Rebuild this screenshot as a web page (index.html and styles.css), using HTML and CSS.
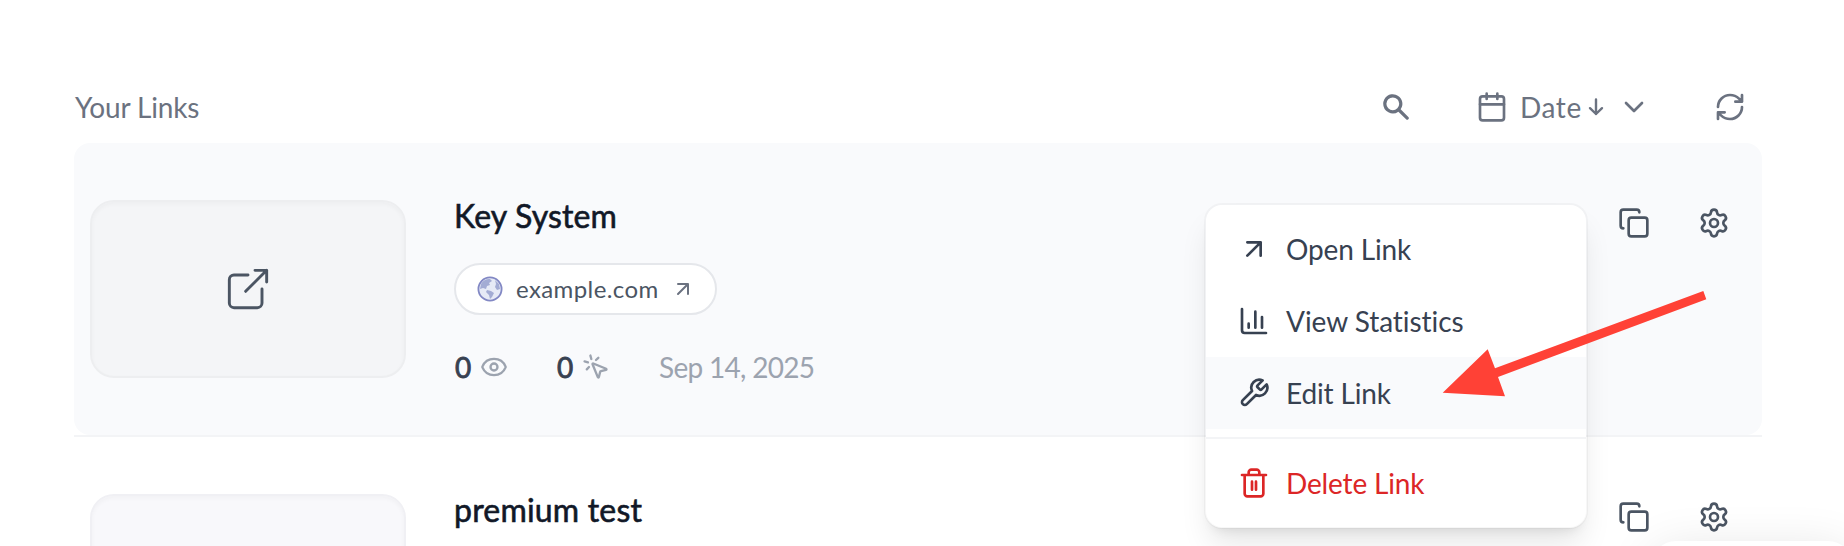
FILE: index.html
```html
<!DOCTYPE html>
<html lang="en">
<head>
<meta charset="utf-8">
<title>Your Links</title>
<link rel="stylesheet" href="styles.css">
</head>
<body>
<div class="screen">
<svg class="sprite" aria-hidden="true">
  <symbol id="copy" viewBox="0 0 24 24"><rect x="8" y="8" width="14" height="14" rx="2"/><path d="M4 16c-1.1 0-2-.9-2-2V4c0-1.1.9-2 2-2h10c1.100 0 2 .9 2 2"/></symbol>
  <symbol id="gear" viewBox="0 0 24 24"><path d="M9.671 4.136a2.340 2.340 0 0 1 4.659 0 2.340 2.340 0 0 0 3.319 1.915 2.340 2.340 0 0 1 2.330 4.033 2.340 2.340 0 0 0 0 3.831 2.340 2.340 0 0 1-2.330 4.033 2.340 2.340 0 0 0-3.319 1.915 2.340 2.340 0 0 1-4.659 0 2.340 2.340 0 0 0-3.320-1.915 2.340 2.340 0 0 1-2.330-4.033 2.340 2.340 0 0 0 0-3.831A2.340 2.340 0 0 1 6.350 6.051a2.340 2.340 0 0 0 3.319-1.915"/><circle cx="12" cy="12" r="3"/></symbol>
  <symbol id="out" viewBox="0 0 24 24"><path d="M7 7h10v10M7 17 17 7"/></symbol>
</svg>
<main class="page">
  <header class="toolbar">
    <h2 class="heading">Your Links</h2>
    <div class="tools">
      <svg class="search" viewBox="0 0 20 20"><path fill-rule="evenodd" d="M8 4a4 4 0 100 8 4 4 0 000-8zM2 8a6 6 0 1110.890 3.476l4.817 4.817a1 1 0 01-1.414 1.414l-4.816-4.816A6 6 0 012 8z"/></svg>
      <div class="sort">
        <svg class="icon" viewBox="0 0 24 24"><path d="M8 2v4M16 2v4M3 10h18"/><rect x="3" y="4" width="18" height="18" rx="2"/></svg>
        <span class="sort-label">Date</span>
        <svg class="sort-dir" viewBox="0 0 16 18"><path d="M8 1.500V16M2 10.200 8 16l6-5.800"/></svg>
        <svg class="icon" viewBox="0 0 24 24"><path d="m6 9 6 6 6-6"/></svg>
      </div>
      <svg class="icon" viewBox="0 0 24 24"><path d="M3 12a9 9 0 0 1 9-9 9.750 9.750 0 0 1 6.740 2.740L21 8M21 3v5h-5M21 12a9 9 0 0 1-9 9 9.750 9.750 0 0 1-6.740-2.740L3 16M8 16H3v5"/></svg>
    </div>
  </header>

  <article class="row row-active">
    <div class="thumb">
      <svg class="thumb-icon" viewBox="0 0 24 24"><path d="M12 6H6a2 2 0 0 0-2 2v10a2 2 0 0 0 2 2h10a2 2 0 0 0 2-2v-6M11 13l9-9M15 4h5v5"/></svg>
    </div>
    <div class="info">
      <h3 class="title title-key">Key System</h3>
      <div class="pill">
        <svg class="globe" viewBox="0 0 26 26"><circle cx="13" cy="13" r="11.600" fill="#e6eaf6" stroke="#8288c4" stroke-width="1.800"/><path fill="#a3acd4" d="M4 8C6 4 10 2.500 13 3l2 2-3 2 1 2-3 1-1 3-3-1-3 1zM10 14l4 1 3 2-2 4-2 2-1-4-3-3zM18 4l4 4 1 5-3 1-2-3 1-3z"/></svg>
        <span class="domain">example.com</span>
        <svg class="pill-out"><use href="#out"/></svg>
      </div>
      <div class="stats">
        <div class="stat"><b class="count">0</b><svg class="stat-icon" viewBox="0 0 24 24"><path d="M2.062 12.348a1 1 0 0 1 0-.696 10.750 10.750 0 0 1 19.876 0 1 1 0 0 1 0 .696 10.750 10.750 0 0 1-19.876 0"/><circle cx="12" cy="12" r="3"/></svg></div>
        <div class="stat"><b class="count">0</b><svg class="stat-icon" viewBox="0 0 24 24"><path d="M14 4.100 12 6M5.100 8l-2.900-.8M6 12l-1.900 2M7.200 2.200 8 5.100M9.037 9.690a.498.498 0 0 1 .653-.653l11 4.500a.5.5 0 0 1-.074.949l-4.349 1.041a1 1 0 0 0-.74.739l-1.040 4.350a.5.5 0 0 1-.95.074z"/></svg></div>
        <time class="date">Sep 14, 2025</time>
      </div>
    </div>
    <div class="actions">
      <svg class="icon"><use href="#copy"/></svg>
      <svg class="icon"><use href="#gear"/></svg>
    </div>

    <nav class="menu">
      <a class="item"><svg class="icon"><use href="#out"/></svg><span>Open Link</span></a>
      <a class="item"><svg class="icon" viewBox="0 0 24 24"><path d="M3 3v16a2 2 0 0 0 2 2h16M18 17V9M13 17V5M8 17v-3"/></svg><span class="stats-label">View Statistics</span></a>
      <a class="item item-hover"><svg class="icon" viewBox="0 0 24 24"><path d="M14.700 6.300a1 1 0 0 0 0 1.400l1.600 1.600a1 1 0 0 0 1.400 0l3.770-3.770a6 6 0 0 1-7.940 7.940l-6.910 6.910a2.120 2.120 0 0 1-3-3l6.910-6.910a6 6 0 0 1 7.940-7.940l-3.760 3.760z"/></svg><span>Edit Link</span></a>
      <hr class="divider">
      <a class="item item-danger"><svg class="icon" viewBox="0 0 24 24"><path d="M3 6h18M19 6v14c0 1-1 2-2 2H7c-1 0-2-1-2-2V6M8 6V4c0-1 1-2 2-2h4c1 0 2 1 2 2v2M10.500 11v6M13.500 11v6"/></svg><span>Delete Link</span></a>
    </nav>
  </article>

  <article class="row">
    <div class="thumb thumb-plain"></div>
    <div class="info"><h3 class="title title-premium">premium test</h3></div>
    <div class="actions">
      <svg class="icon"><use href="#copy"/></svg>
      <svg class="icon"><use href="#gear"/></svg>
    </div>
  </article>
</main>
<div class="toast"></div>
<svg class="pointer" viewBox="0 0 266 108"><path d="M.7 103.700 45.700 60.300 53 79.300 261.300 2 264.300 10.300 56 88 63 107.300z"/></svg>
</div>
</body>
</html>
```

FILE: styles.css
```css
* { box-sizing: border-box; }
body {
  margin: 0;
  background: #fff;
  font-family: Lato, "Open Sans", sans-serif;
  font-size: 28px;
  line-height: 40px;
  font-variant-ligatures: none;
  color: #374151;
}
h2, h3, hr { margin: 0; }
svg { display: block; flex: none; fill: none; stroke: currentColor; stroke-width: 2; stroke-linecap: round; stroke-linejoin: round; }
.screen { position: relative; z-index: 0; height: 546px; overflow: hidden; }
.sprite { position: absolute; width: 0; height: 0; }
.icon { width: 32px; height: 32px; }

.page { padding: 71px 82px 0 74px; }
.toolbar { display: flex; align-items: center; justify-content: space-between; height: 72px; padding-right: 16px; color: #6b7280; }
.heading { padding-left: 1px; font-size: 28px; font-weight: 400; letter-spacing: -.15px; }
.tools { display: flex; align-items: center; gap: 64px; }
.search { width: 32px; height: 32px; fill: currentColor; stroke: none; }
.sort { display: flex; align-items: center; width: 174px; }
.sort-label { width: 68px; margin-left: 12px; letter-spacing: .6px; }
.sort-dir { width: 16px; height: 18px; margin-right: 14px; stroke-width: 2.4; }

.row { position: relative; display: flex; height: 294px; padding: 57px 32px 0 16px; border-bottom: 2px solid #f3f4f6; }
.row-active::before { content: ""; position: absolute; inset: 0; z-index: -1; border-radius: 16px; background: #f9fafc; }
.thumb { display: grid; place-items: center; width: 316px; height: 178px; border: 2px solid #edeef0; border-radius: 24px; background: #f4f5f7; box-shadow: inset 0 2px 4px rgba(0, 0, 0, .03); color: #4b5563; }
.thumb-plain { background: #f8f8fb; border-color: #f0f0f4; }
.thumb-icon { width: 56px; height: 56px; stroke-width: 1.25; }
.info { flex: 1; padding-left: 48px; }
.title { height: 32px; font-size: 32px; line-height: 32px; font-weight: 400; -webkit-text-stroke: .6px currentColor; color: #111827; }
.title-key { letter-spacing: .15px; }
.title-premium { letter-spacing: .2px; }
.pill { display: flex; align-items: center; width: 263px; height: 52px; margin-top: 31px; padding-left: 21px; border: 2px solid #e5e7eb; border-radius: 26px; background: #fff; color: #4b5563; }
.globe { width: 26px; height: 26px; stroke: none; }
.domain { width: 145px; margin-left: 13px; font-size: 24px; letter-spacing: .4px; }
.pill-out { width: 24px; height: 24px; margin-left: 10px; color: #6b7280; }
.stats { display: flex; align-items: center; margin-top: 32px; padding-left: 1px; }
.stat { display: flex; align-items: center; width: 102px; gap: 8px; }
.count { width: 17px; font-weight: 400; -webkit-text-stroke: .8px currentColor; }
.stat-icon { width: 28px; height: 28px; color: #9ca3af; }
.date { letter-spacing: -.7px; color: #9ca3af; }
.actions { display: flex; gap: 48px; padding-top: 7px; color: #4b5563; }

.menu { position: absolute; z-index: 2; left: 1130px; top: 60px; width: 384px; height: 326px; padding: 8px 0; background: #fff; background-clip: padding-box; border: 2px solid rgba(0, 0, 0, .03); border-radius: 18px; box-shadow: 0 20px 30px -6px rgba(0, 0, 0, .1), 0 8px 12px -8px rgba(0, 0, 0, .1); }
.item { display: flex; align-items: center; gap: 16px; height: 72px; padding-left: 32px; letter-spacing: -.15px; }
.stats-label { letter-spacing: -.05px; }
.item-hover { background: #f9fafc; }
.item-danger { color: #dc2626; }
.divider { height: 2px; margin: 8px 0; border: 0; background: #f3f4f6; }

.toast { position: absolute; z-index: 1; left: 1652px; top: 541px; width: 200px; height: 80px; border-radius: 24px; background: #fff; box-shadow: 0 10px 50px rgba(0, 0, 0, .12); }
.pointer { position: absolute; z-index: 3; left: 1442px; top: 289px; width: 266px; height: 108px; fill: #ff4136; stroke: none; }
```
